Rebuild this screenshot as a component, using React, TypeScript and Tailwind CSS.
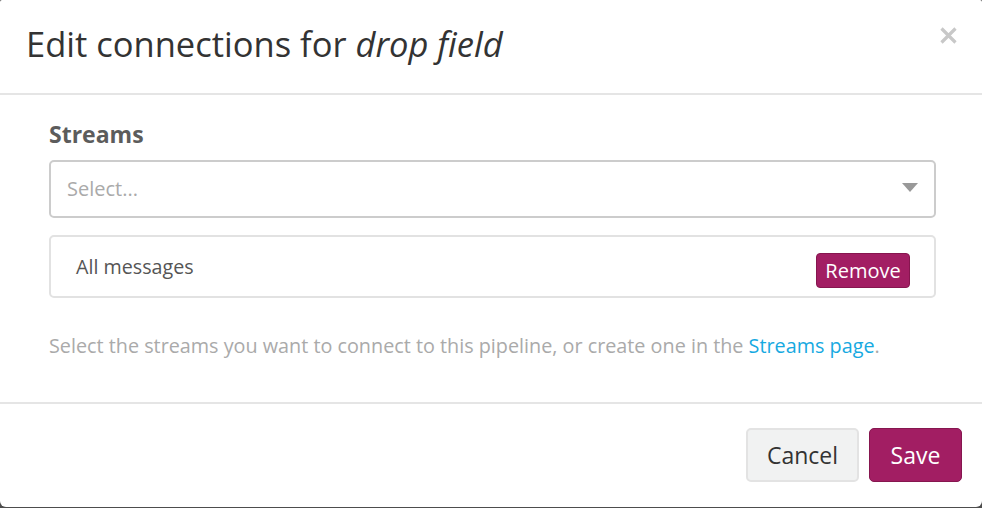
import React from "react";

export default function App() {
  return (
    <div className="w-[982px] h-[508px] bg-[#4d4d4d]" style={{ fontFamily: '"Open Sans", "Liberation Sans", sans-serif' }}>
      <div className="w-[982px] h-[507px] bg-white rounded-b-[6px] rounded-t-[2px] flex flex-col overflow-hidden">
        {/* Header */}
        <div className="relative pt-[21px] pb-[27px] pl-[26px] pr-[26px] border-b-2 border-[#e5e5e5]">
          <h1 className="text-[34.5px] leading-[45px] text-[#333] m-0">
            Edit connections for <em className="italic">drop field</em>
          </h1>
          <button className="absolute left-[940px] top-[27px] w-[17px] h-[17px] flex items-center justify-center">
            <svg width="17" height="17" viewBox="0 0 17 17">
              <path d="M1.5 1.5 L15.5 15.5 M15.5 1.5 L1.5 15.5" stroke="#c8c8c8" strokeWidth="3.2" strokeLinecap="butt" />
            </svg>
          </button>
        </div>

        {/* Body */}
        <div className="pt-[24px] pl-[49px] pr-[46px] flex-1 border-b-2 border-[#e5e5e5]">
          <div className="text-[23px] leading-[31px] font-bold text-[#5c5c5c]">Streams</div>
          <div className="mt-[10px] h-[58px] border-2 border-[#cccccc] rounded-[5px] flex items-center justify-between pl-[16px] pr-[16px]">
            <span className="text-[20px] text-[#aaaaaa]">Select...</span>
            <svg width="16" height="9" viewBox="0 0 16 9" className="mt-[-4px]">
              <path d="M0 0 L16 0 L8 9 Z" fill="#999999" />
            </svg>
          </div>
          <div className="mt-[17px] h-[63px] border-2 border-[#e2e2e2] rounded-[5px] flex items-start justify-between pl-[25px] pr-[24px] pt-[16px]">
            <span className="text-[19.7px] leading-[27px] text-[#555555]">All messages</span>
            <button className="h-[35px] w-[94px] bg-[#a21e63] border border-[#86164f] rounded-[4px] text-white text-[20px] leading-[24px] flex items-center justify-center">
              Remove
            </button>
          </div>
          <p className="mt-[34px] text-[19.8px] leading-[27px] text-[#aaaaaa]">
            Select the streams you want to connect to this pipeline, or create one in the{" "}
            <span className="text-[#16a9e1]">Streams page</span>.
          </p>
        </div>

        {/* Footer */}
        <div className="h-[103px] flex justify-end items-start pt-[24px] pr-[20px] gap-[10px]">
          <button className="h-[54px] w-[113px] bg-[#f1f2f2] border-2 border-[#e3e3e3] rounded-[5px] text-[23px] text-[#333] flex items-center justify-center">
            Cancel
          </button>
          <button className="h-[54px] w-[93px] bg-[#a21e63] border border-[#86164f] rounded-[5px] text-[23px] text-white flex items-center justify-center">
            Save
          </button>
        </div>
      </div>
    </div>
  );
}
